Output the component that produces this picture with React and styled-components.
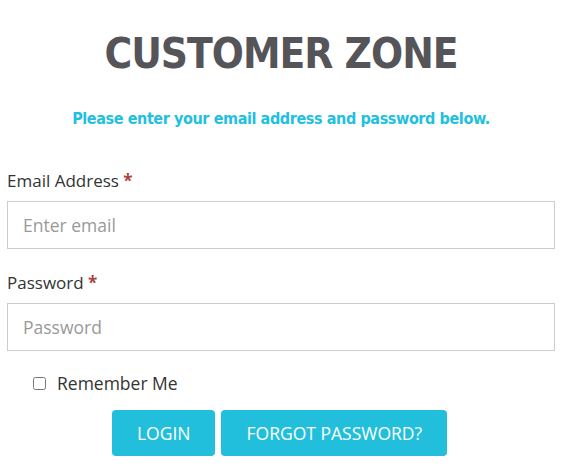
import React, { useState } from 'react';
import styled, { createGlobalStyle } from 'styled-components';

const GlobalStyle = createGlobalStyle`
    html, body {
        margin: 0;
        padding: 0;
        background: #ffffff;
    }
    body {
        font-family: 'Open Sans', 'Liberation Sans', sans-serif;
        color: #333333;
    }
`;

const Page = styled.div`
    padding: 26px 10px 0 7px;
`;

const Title = styled.h1`
    margin: 0;
    text-align: center;
    font-family: 'DejaVu Sans Condensed', 'DejaVu Sans', sans-serif;
    font-weight: 700;
    font-size: 42px;
    line-height: 56px;
    letter-spacing: -1px;
    color: #555459;
`;

const Subtitle = styled.p`
    margin: 26px 0 0;
    text-align: center;
    font-family: 'DejaVu Sans Condensed', 'DejaVu Sans', sans-serif;
    font-weight: 700;
    font-size: 16px;
    line-height: 22px;
    letter-spacing: -0.4px;
    color: #22bfe0;
`;

const Form = styled.form`
    margin-top: 39px;
    display: flex;
    flex-direction: column;
`;

const Field = styled.div`
    display: flex;
    flex-direction: column;
    margin-bottom: ${(props) => props.gap || '22px'};
`;

const Label = styled.label`
    font-size: 17px;
    line-height: 24px;
    font-weight: 400;
    color: #333333;
    margin-bottom: 8px;
`;

const Required = styled.span`
    color: #a94442;
    font-weight: 700;
`;

const Input = styled.input`
    box-sizing: border-box;
    width: 100%;
    height: 48px;
    padding: 0 15px;
    border: 1px solid #cccccc;
    border-radius: 0;
    font-family: 'Open Sans', 'Liberation Sans', sans-serif;
    font-size: 17.5px;
    color: #555555;
    outline: none;
    &::placeholder {
        color: #999999;
    }
`;

const CheckRow = styled.label`
    display: flex;
    align-items: center;
    gap: 11px;
    padding-left: 26px;
    font-size: 17.5px;
    line-height: 24px;
    color: #333333;
`;

const Check = styled.input`
    margin: 0;
    width: 13px;
    height: 13px;
`;

const Actions = styled.div`
    display: flex;
    justify-content: center;
    gap: 6px;
    margin-top: 15px;
    padding-right: 3px;
`;

const Button = styled.button`
    height: 46px;
    padding: 0 25px;
    border: none;
    border-radius: 4px;
    background: #22bfdd;
    color: #ffffff;
    font-family: 'Open Sans', 'Liberation Sans', sans-serif;
    font-size: 17.5px;
    text-transform: uppercase;
    cursor: pointer;
`;

const App = () => {
    const [remember, setRemember] = useState(false);

    return (
        <Page>
            <GlobalStyle />
            <Title>CUSTOMER ZONE</Title>
            <Subtitle>Please enter your email address and password below.</Subtitle>
            <Form onSubmit={(e) => e.preventDefault()}>
                <Field>
                    <Label htmlFor="email">
                        Email Address <Required>*</Required>
                    </Label>
                    <Input id="email" type="email" placeholder="Enter email" />
                </Field>
                <Field gap="20px">
                    <Label htmlFor="password">
                        Password <Required>*</Required>
                    </Label>
                    <Input id="password" type="password" placeholder="Password" />
                </Field>
                <CheckRow>
                    <Check
                        type="checkbox"
                        checked={remember}
                        onChange={() => setRemember(!remember)}
                    />
                    Remember Me
                </CheckRow>
                <Actions>
                    <Button type="submit">Login</Button>
                    <Button type="button">Forgot Password?</Button>
                </Actions>
            </Form>
        </Page>
    );
};

export default App;
